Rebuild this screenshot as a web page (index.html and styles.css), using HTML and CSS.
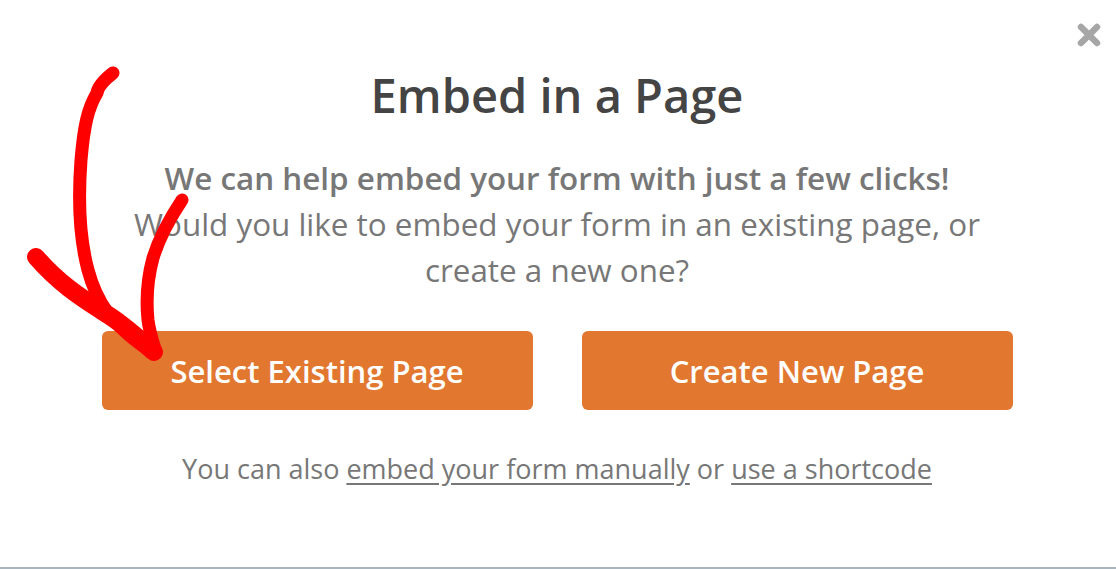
FILE: index.html
```html
<!DOCTYPE html>
<html lang="en">
<head>
<meta charset="utf-8">
<title>Embed in a Page</title>
<link rel="stylesheet" href="styles.css">
</head>
<body>
<div class="modal">
  <button class="close" aria-label="Close">
    <svg width="24" height="24" viewBox="0 0 24 24"><path d="M4 4 L20 20 M20 4 L4 20" stroke="#a6a6a6" stroke-width="6.5" stroke-linecap="round"/></svg>
  </button>
  <h1 class="title">Embed in a Page</h1>
  <div class="intro">
    <p class="lead">We can help embed your form with just a few clicks!</p>
    <p class="question">Would you like to embed your form in an existing page, or<br>create a new one?</p>
  </div>
  <div class="actions">
    <button class="btn">Select Existing Page</button>
    <button class="btn">Create New Page</button>
  </div>
  <p class="alt">You can also <a href="#">embed your form manually</a> or <a href="#">use a shortcode</a></p>
  <svg class="arrow" width="220" height="380" viewBox="0 0 220 380">
    <path d="M113 73 C104 80 98 86 97 93 C88 108 84 125 81 160 C78 200 80 240 88 270 C96 300 110 325 153 353" fill="none" stroke="#ff0000" stroke-width="13" stroke-linecap="round" stroke-linejoin="round"/>
    <path d="M36 257 C60 285 85 300 105 313 C125 325 140 340 154 352" fill="none" stroke="#ff0000" stroke-width="18" stroke-linecap="round"/>
    <path d="M182 200 C170 218 160 235 153 258 C147 280 146 300 148 320 C150 335 154 345 156 352" fill="none" stroke="#ff0000" stroke-width="13" stroke-linecap="round"/>
  </svg>
</div>
<div class="bottom-edge"></div>
</body>
</html>
```
FILE: styles.css
```css
html, body {
  margin: 0;
  padding: 0;
  background: #ffffff;
}
body {
  font-family: "Open Sans", "Noto Sans", sans-serif;
  height: 569px;
  display: flex;
  flex-direction: column;
}
.modal {
  position: relative;
  flex: 1;
  display: flex;
  flex-direction: column;
  align-items: center;
  padding-top: 64px;
  padding-right: 2px;
}
.close {
  position: absolute;
  top: 23px;
  right: 15px;
  border: 0;
  background: none;
  padding: 0;
  cursor: pointer;
}
.title {
  margin: 0;
  font-size: 47px;
  font-weight: 600;
  color: #444444;
  line-height: 62px;
}
.intro {
  margin-top: 29px;
  text-align: center;
  color: #777777;
  font-size: 31.4px;
  line-height: 46px;
}
.intro p {
  margin: 0;
}
.lead {
  font-weight: 600;
}
.actions {
  margin-top: 38px;
  display: flex;
  gap: 49px;
}
.btn {
  width: 431px;
  height: 79px;
  border: 0;
  border-radius: 6px;
  background: #e27730;
  color: #ffffff;
  font-family: inherit;
  font-size: 31px;
  font-weight: 600;
  cursor: pointer;
}
.alt {
  margin: 40px 0 0;
  color: #777777;
  font-size: 27px;
}
.alt a {
  color: #777777;
  text-decoration: underline;
  text-underline-offset: 4px;
}
.arrow {
  position: absolute;
  left: 0;
  top: 0;
}
.bottom-edge {
  height: 2px;
  background: #a9b5bd;
}
```
